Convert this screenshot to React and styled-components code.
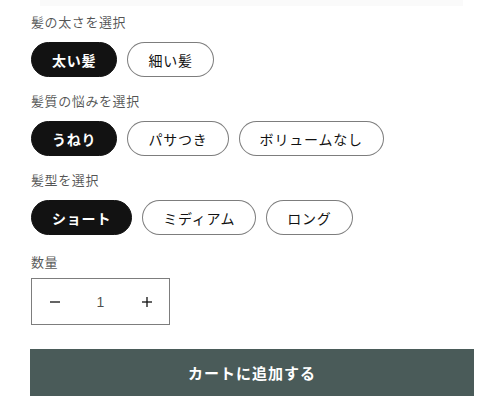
import React from 'react'
import { useState } from 'react'
import styled, { createGlobalStyle } from 'styled-components'

const GlobalStyle = createGlobalStyle`
  body {
    margin: 0;
    background: #ffffff;
    font-family: 'Noto Sans CJK JP', 'Noto Sans', sans-serif;
    color: #121212;
  }
`

const options = [
  { label: '髪の太さを選択', values: ['太い髪', '細い髪'] },
  { label: '髪質の悩みを選択', values: ['うねり', 'パサつき', 'ボリュームなし'] },
  { label: '髪型を選択', values: ['ショート', 'ミディアム', 'ロング'] },
]

const App = () => {
  // first value of every option is picked by default
  const [picked, setPicked] = useState(options.map(o => o.values[0]))
  const [qty, setQty] = useState(1)

  const pick = (i, v) => setPicked(picked.map((p, j) => (j === i ? v : p)))

  return (<Page>
    <GlobalStyle />
    <TopStrip />
    {options.map((o, i) => (
      <Fieldset key={o.label} $first={i === 0}>
        <Legend>{o.label}</Legend>
        <PillRow>
          {o.values.map(v => (
            <Pill key={v} $active={picked[i] === v} onClick={() => pick(i, v)}>{v}</Pill>
          ))}
        </PillRow>
      </Fieldset>
    ))}
    <QtyLabel>数量</QtyLabel>
    <Quantity>
      <QtyButton onClick={() => setQty(Math.max(1, qty - 1))} aria-label="減らす">
        <svg width="10" height="2" viewBox="0 0 10 2"><rect width="10" height="1.3" y="0.35" fill="#121212" /></svg>
      </QtyButton>
      <QtyValue>{qty}</QtyValue>
      <QtyButton onClick={() => setQty(qty + 1)} aria-label="増やす">
        <svg width="10" height="10" viewBox="0 0 10 10">
          <rect width="10" height="1.3" y="4.35" fill="#121212" />
          <rect width="1.3" height="10" x="4.35" fill="#121212" />
        </svg>
      </QtyButton>
    </Quantity>
    <CartButton>カートに追加する</CartButton>
  </Page>)
}

const Page = styled.div`
  width: 443px;
  padding: 0 0 0 31px;
`

const TopStrip = styled.div`
  position: absolute;
  top: 0;
  left: 40px;
  width: 423px;
  height: 6px;
  background: #fafafa;
`

const Fieldset = styled.div`
  padding-top: ${p => (p.$first ? '12px' : '14px')};
`

const Legend = styled.div`
  font-size: 13px;
  line-height: 20px;
  letter-spacing: 0.6px;
  color: rgba(18, 18, 18, 0.72);
  margin-bottom: 10px;
`

const PillRow = styled.div`
  display: flex;
  gap: 10px;
`

const Pill = styled.button`
  height: 35px;
  padding: 0 20px;
  border-radius: 40px;
  border: 1px solid ${p => (p.$active ? '#121212' : 'rgba(18, 18, 18, 0.55)')};
  background: ${p => (p.$active ? '#121212' : '#ffffff')};
  color: ${p => (p.$active ? '#ffffff' : '#121212')};
  font-family: 'Noto Sans CJK JP', sans-serif;
  font-size: 14px;
  font-weight: ${p => (p.$active ? 700 : 400)};
  letter-spacing: 0.8px;
  line-height: 1;
  cursor: pointer;
`

const QtyLabel = styled.div`
  margin-top: 17px;
  font-size: 13px;
  line-height: 20px;
  letter-spacing: 0.6px;
  color: rgba(18, 18, 18, 0.72);
  margin-bottom: 6px;
`

const Quantity = styled.div`
  display: flex;
  width: 139px;
  height: 47px;
  box-sizing: border-box;
  border: 1px solid rgba(18, 18, 18, 0.55);
`

const QtyButton = styled.button`
  width: 45px;
  border: none;
  background: transparent;
  display: flex;
  align-items: center;
  justify-content: center;
  padding: 0;
  cursor: pointer;
`

const QtyValue = styled.div`
  flex: 1;
  display: flex;
  align-items: center;
  justify-content: center;
  font-family: 'Liberation Sans', sans-serif;
  font-size: 14px;
  color: rgba(18, 18, 18, 0.75);
`

const CartButton = styled.button`
  display: block;
  margin-top: 24px;
  margin-left: -1px;
  width: 444px;
  height: 47px;
  border: none;
  background: #4a5b59;
  color: #ffffff;
  font-family: 'Noto Sans CJK JP', sans-serif;
  font-size: 15px;
  font-weight: 700;
  letter-spacing: 1px;
  cursor: pointer;
`

export default App
